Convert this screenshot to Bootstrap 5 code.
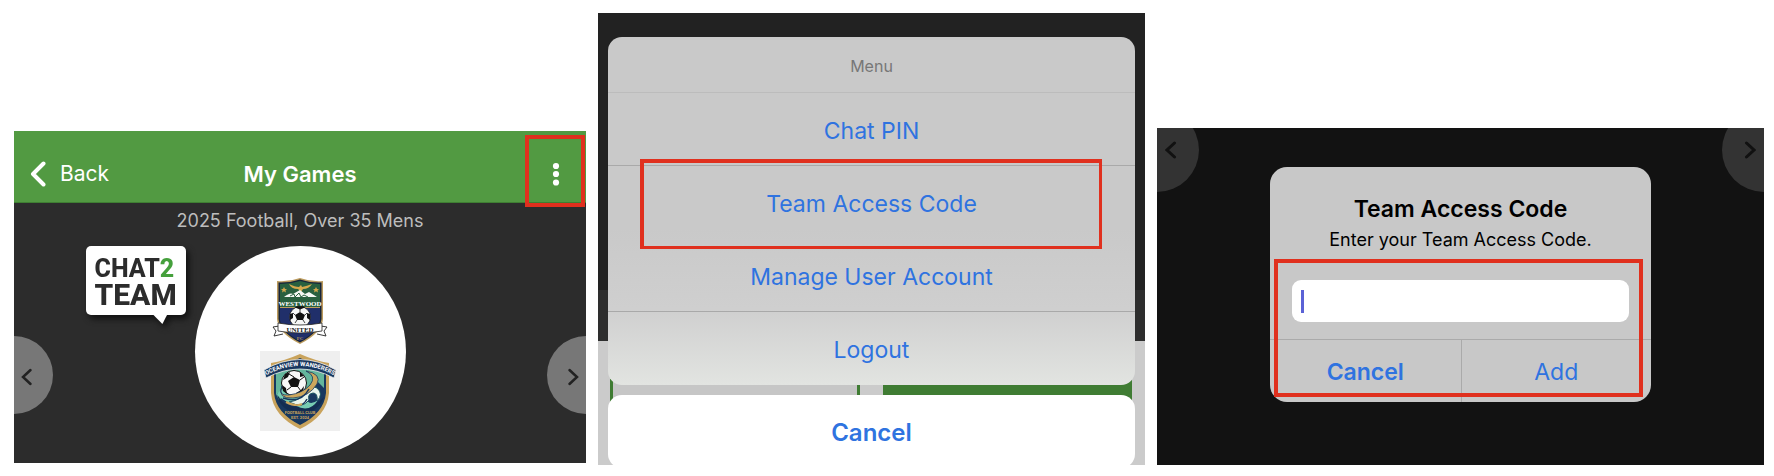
<!DOCTYPE html>
<html lang="en">
<head>
<meta charset="utf-8">
<meta name="viewport" content="width=device-width, initial-scale=1">
<title>Team access code</title>
<link href="https://cdn.jsdelivr.net/npm/bootstrap@5.3.0/dist/css/bootstrap.min.css" rel="stylesheet">
<style>
  body { font-family: Inter, "Liberation Sans", sans-serif; background: #fff; }
  .steps { display: grid; grid-template-columns: 572fr 547fr 607fr; gap: 12px; padding: 13px 10px 11px 14px; align-items: end; }
  .btn { --bs-btn-border-width: 0; }
  .marked::after { content: ""; position: absolute; border: 4px solid #e0301e; pointer-events: none; z-index: 3; }

  /* games screen */
  .games { background: #2c2c2c; margin-bottom: 2px; padding-bottom: 6px; }
  .games-bar { background: #529a42; height: 72px; border-bottom: 1px solid #3f7f33; display: grid; grid-template-columns: 1fr auto 1fr; align-items: center; padding-top: 14px; }
  .games-bar h1 { font-size: 22px; line-height: 24px; font-weight: 600; }
  .back-btn { font-size: 21px; line-height: 24px; padding: 0 0 0 16px; gap: 14px; color: #fff !important; }
  .more-btn { width: 60px; height: 36px; padding: 0; position: relative; color: #fff !important; }
  .more-btn::after { inset: -21px 1px -15px -1px; }
  .season { font-size: 18px; line-height: 24px; color: #bdbdbd; padding-top: 6px; margin-bottom: 13px; }
  .matchup { display: grid; grid-template-columns: 1fr 211px 1fr; }
  .crest-disc { width: 211px; height: 211px; gap: 6px; padding-top: 5px; }
  .bubble { position: relative; background: #fff; border-radius: 5px; width: 100px; height: 69px; padding: 11px 0 0 9px; font-family: Roboto, sans-serif; font-weight: 800; color: #2c2c2c; filter: drop-shadow(3px 4px 3px #111); margin-right: 9px; }
  .bubble::after { content: ""; position: absolute; left: 67px; top: 68px; width: 15px; height: 10px; background: #fff; clip-path: polygon(0 0, 100% 0, 66% 100%); }
  .bubble span { display: block; }
  .b-chat { font-size: 25px; line-height: 24px; }
  .b-team { font-size: 30px; line-height: 28px; }
  .b-chat b { color: #45a03c; font-weight: inherit; }
  .round-btn { width: 39px; height: 78px; background: #777 !important; margin-top: 47px; align-self: center; }
  .round-left { border-radius: 0 78px 78px 0; padding: 0 13px 0 0; }
  .round-right { border-radius: 78px 0 0 78px; padding: 0 0 0 13px; }

  /* action sheet */
  .sheet-screen { background: linear-gradient(#222 277px, #2e2e2e 277px 328px, #cbcbcb 328px); height: 452px; padding: 24px 10px 0; overflow: hidden; position: relative; }
  .sheet { background: linear-gradient(#c9c9c9 55%, #cfcfcf 78%, #e2e4e1); border-radius: 14px; position: relative; }
  .sheet-title { height: 56px; padding-top: 2px; font-size: 16px; color: #777; border-bottom: 1px solid #bcbcbc; }
  .sheet-btn { height: 73px; font-size: 23px; line-height: 30px; color: #2f73e0 !important; border-radius: 0; padding: 3px 0 0; }
  .sheet-line { border-bottom: 1px solid #a9a9a9; }
  .sheet-code { position: relative; }
  .sheet-code::after { inset: -7px 33px -10px 32px; border-right-width: 3px; border-bottom-width: 3px; }
  .peek { position: absolute; left: 12px; right: 13px; top: 366px; height: 30px; gap: 23px; display: grid; grid-template-columns: 251fr 249fr; }
  .peek-open { border: 3px solid #3f7c33; border-width: 0 3px; background: #c6c6c6; }
  .peek-full { background: #3f7c33; }
  .sheet-cancel { background: #fff !important; border-radius: 14px; margin-top: 10px; position: relative; font-size: 24px; font-weight: 600; }

  /* code dialog */
  .code-screen { background: #121212; padding: 39px 113px 63px; position: relative; overflow: hidden; }
  .dim-btn { position: absolute; top: -20px; width: 42px; height: 84px; background: #333 !important; }
  .dim-left { left: 0; border-radius: 0 84px 84px 0; padding: 0 14px 3px 0; }
  .dim-right { right: 0; border-radius: 84px 0 0 84px; padding: 0 0 3px 14px; }
  .code-box { background: #c8c8c8; border-radius: 17px; position: relative; color: #000; }
  .code-box h2 { font-size: 23px; line-height: 28px; font-weight: 600; padding-top: 28px; margin: 0; }
  .code-box label { font-size: 18px; line-height: 24px; padding-top: 5px; display: block; }
  .code-box::after { inset: 92px 8px 5px 4px; }
  .code-field { padding: 28px 22px 17px; position: relative; }
  .code-field input { height: 42px; border: 0; border-radius: 9px; background: #fff; }
  .text-caret { position: absolute; left: 31px; top: 38px; width: 3px; height: 23px; background: #5b62d6; }
  .code-actions { border-top: 1px solid #aaa; }
  .code-actions .btn { height: 62px; font-size: 23px; line-height: 28px; color: #2f73e0 !important; border-radius: 0; padding: 2px 0 0; }
  .code-actions .btn + .btn { border-left: 1px solid #aaa; }
</style>
</head>
<body>
<main class="steps">

  <section class="games">
    <header class="games-bar text-white">
      <button class="btn back-btn d-flex align-items-center" type="button">
        <svg width="16" height="26" viewBox="0 0 16 26" fill="none" stroke="currentColor" stroke-width="4" stroke-linecap="round" stroke-linejoin="round" aria-hidden="true"><path d="M13.500 2.500 3 13l10.500 10.500"/></svg>Back
      </button>
      <h1 class="m-0">My Games</h1>
      <button class="btn more-btn marked ms-auto" type="button" aria-label="More options">
        <svg width="8" height="24" viewBox="0 0 8 24" fill="currentColor" aria-hidden="true"><circle cx="4" cy="4" r="3.100"/><circle cx="4" cy="12" r="3.100"/><circle cx="4" cy="20.500" r="3.100"/></svg>
      </button>
    </header>
    <p class="season text-center">2025 Football, Over 35 Mens</p>
    <div class="matchup">
      <div class="d-flex justify-content-between align-items-start">
        <button class="btn round-btn round-left" type="button" aria-label="Previous game">
          <svg width="12" height="18" viewBox="0 0 12 18" fill="none" stroke="#222" stroke-width="2.500" stroke-linecap="round" aria-hidden="true"><path d="M9.500 2 2 9l7.500 7"/></svg>
        </button>
        <div class="bubble"><span class="b-chat">CHAT<b>2</b></span><span class="b-team">TEAM</span></div>
      </div>
      <div class="crest-disc bg-white rounded-circle d-flex flex-column align-items-center justify-content-center">
        <svg width="56" height="68" viewBox="0 0 56 68" role="img" aria-label="Westwood United FC">
          <path d="M5 4Q17 5 28 1Q39 5 51 4V42Q50 56 28 67Q6 56 5 42Z" fill="#bb9a5c"/>
          <path d="M6.500 5.500Q18 6 28 2.500Q38 6 49.500 5.500V42Q48 55 28 65.500Q8 55 6.500 42Z" fill="#17243a"/>
          <path d="M8 7Q18 7 28 4Q38 7 48 7V31H8Z" fill="#28603f"/>
          <path d="M8 31H48V43Q46 55 28 64Q10 55 8 43Z" fill="#202f6a"/>
          <path d="M17 7Q23 10 27 10L29 8 30 10Q35 9 40 7Q37 12 31 12L29 15 26 12Q19 12 17 7Z" fill="#d5a84d"/>
          <path d="m12 10 1 2 2 .2-1.600 1.300.6 2L12 14.300l-2 1.200.6-2L9 12.200l2-.2ZM44 10l1 2 2 .2-1.600 1.300.6 2L44 14.300l-2 1.200.6-2L41 12.200l2-.2Z" fill="#d5a84d"/>
          <path d="M12 20Q18 15 21 17L28 13 33 17 37 15 45 20Z" fill="#f4f7f3"/>
          <path d="m18 19 4-2 1 3 4-4 2 4 3-2 4 2" fill="none" stroke="#28603f"/>
          <path d="M8 30.500H48" stroke="#bb9a5c"/>
          <text x="28" y="28.500" font-family="Liberation Serif, serif" font-size="7" font-weight="700" fill="#fff" text-anchor="middle">WESTWOOD</text>
          <circle cx="28" cy="40" r="10.500" fill="#f7f7f7" stroke="#111" stroke-width=".8"/>
          <path d="m28 35 5 3-2 5h-6l-2-5ZM23 30.500l5 2 5-2-2-1.200h-6ZM18 37l3-1 0 5-3 2ZM38 37l-3-1 0 5 3 2Z" fill="#111"/>
          <path d="M28 32v3M33 38l2-2M23 38l-2-2M31 43l2 3M25 43l-2 3" stroke="#111" stroke-width=".8"/>
          <path d="m7 49-6 1 3 4-2 5 9-2M49 49l6 1-3 4 2 5-9-2" fill="#fff" stroke="#222" stroke-width=".9"/>
          <path d="M6 46Q28 50 50 46V54Q28 58 6 54Z" fill="#fff" stroke="#222" stroke-width=".8"/>
          <text x="28" y="54.500" font-family="Liberation Serif, serif" font-size="7" font-weight="700" fill="#17171c" text-anchor="middle">UNITED</text>
          <text x="28" y="62.500" font-family="Liberation Serif, serif" font-size="5" font-weight="700" fill="#b89455" text-anchor="middle">FC</text>
        </svg>
        <svg width="80" height="80" viewBox="0 0 80 80" role="img" aria-label="Oceanview Wanderers Football Club">
          <rect width="80" height="80" fill="#efefef"/>
          <path d="M11 12Q24 10 40 3Q56 10 69 12V42Q67 65 40 78Q13 65 11 42Z" fill="#c9a35c"/>
          <path d="M14 15Q28 13 40 7Q52 13 66 15V42Q64 62 40 74Q16 62 14 42Z" fill="#18385f"/>
          <path d="M16 22Q40 12 64 22V37L58 31 52 40H30L19 49 16 43Z" fill="#64b69c"/>
          <path d="M17 42Q22 57 43 56Q57 54 64 46Q59 61 40 63Q19 60 17 42Z" fill="#142e52"/>
          <path d="M17 44Q23 33 33 37Q43 45 54 39Q47 40 46 47Q49 56 58 49Q50 62 36 55Q24 50 17 44Z" fill="#77cdb3"/>
          <path d="M29 51Q42 49 46 40Q49 33 57 37Q64 43 57 50Q58 42 53 42Q47 43 49 49Q43 58 29 51Z" fill="#e9f6ed" stroke="#1c5561" stroke-width="1"/>
          <circle cx="34" cy="32" r="12.500" fill="#f9f9f9" stroke="#111"/>
          <path d="m34 26 6 3-2 7h-7l-3-6ZM25 23l5-2-2 5-5 3ZM40 21l4 4-4 1ZM22 34l4 3 1 6-4-3ZM36 42l5-3 3-4-1 6-6 4Z" fill="#111"/>
          <path d="M34 26l-5-3M40 29l4-3M38 36l3 4M31 36l-4 3" stroke="#111"/>
          <path d="M22 35Q17 45 29 44Q43 42 50 34Q57 25 46 20Q62 23 57 33Q49 46 33 47Q17 48 22 35Z" fill="#cda75d" stroke="#18385f" stroke-width=".8"/>
          <path d="M23 47Q41 53 49 38M30 54Q43 57 47 48" fill="none" stroke="#18385f" stroke-width="1.500"/>
          <path d="M26 51Q36 56 42 53" fill="none" stroke="#cda75d" stroke-width="2"/>
          <path d="M4 19Q40 -2 76 19L74 27Q40 9 6 27Z" fill="#18385f" stroke="#efefef" stroke-width=".8"/>
          <path id="club-arc" d="M4 25.500Q40 4.500 76 25.500" fill="none"/>
          <text font-family="Roboto, sans-serif" font-size="6" font-weight="700" fill="#fff" text-anchor="middle"><textPath href="#club-arc" startOffset="50%">OCEANVIEW WANDERERS</textPath></text>
          <text x="40" y="63" font-family="Roboto, sans-serif" font-size="4" font-weight="700" fill="#c9a35c" text-anchor="middle">FOOTBALL CLUB</text>
          <text x="40" y="68" font-family="Roboto, sans-serif" font-size="4" font-weight="700" fill="#c9a35c" text-anchor="middle">EST. 2024</text>
        </svg>
      </div>
      <div class="d-flex justify-content-end align-items-start">
        <button class="btn round-btn round-right" type="button" aria-label="Next game">
          <svg width="12" height="18" viewBox="0 0 12 18" fill="none" stroke="#222" stroke-width="2.500" stroke-linecap="round" aria-hidden="true"><path d="m2.500 2 7.500 7-7.500 7"/></svg>
        </button>
      </div>
    </div>
  </section>

  <section class="sheet-screen">
    <div class="peek" aria-hidden="true"><div class="peek-open"></div><div class="peek-full"></div></div>
    <div class="sheet d-flex flex-column">
      <div class="sheet-title d-flex align-items-center justify-content-center">Menu</div>
      <button class="btn sheet-btn sheet-line" type="button">Chat PIN</button>
      <button class="btn sheet-btn sheet-code marked" type="button">Team Access Code</button>
      <button class="btn sheet-btn sheet-line" type="button">Manage User Account</button>
      <button class="btn sheet-btn" type="button">Logout</button>
    </div>
    <button class="btn sheet-btn sheet-cancel w-100" type="button">Cancel</button>
  </section>

  <section class="code-screen">
    <button class="btn dim-btn dim-left" type="button" aria-label="Previous">
      <svg width="12" height="18" viewBox="0 0 12 18" fill="none" stroke="#111" stroke-width="3" stroke-linecap="round" aria-hidden="true"><path d="M9.500 2 2 9l7.500 7"/></svg>
    </button>
    <button class="btn dim-btn dim-right" type="button" aria-label="Next">
      <svg width="12" height="18" viewBox="0 0 12 18" fill="none" stroke="#111" stroke-width="3" stroke-linecap="round" aria-hidden="true"><path d="m2.500 2 7.500 7-7.500 7"/></svg>
    </button>
    <form class="code-box marked text-center">
      <h2>Team Access Code</h2>
      <label for="team-code">Enter your Team Access Code.</label>
      <div class="code-field">
        <input class="form-control" id="team-code" type="text">
        <span class="text-caret"></span>
      </div>
      <div class="code-actions d-flex">
        <button class="btn flex-fill w-50 fw-semibold" type="button">Cancel</button>
        <button class="btn flex-fill w-50" type="button">Add</button>
      </div>
    </form>
  </section>

</main>
<script src="https://cdn.jsdelivr.net/npm/bootstrap@5.3.0/dist/js/bootstrap.bundle.min.js"></script>
</body>
</html>
